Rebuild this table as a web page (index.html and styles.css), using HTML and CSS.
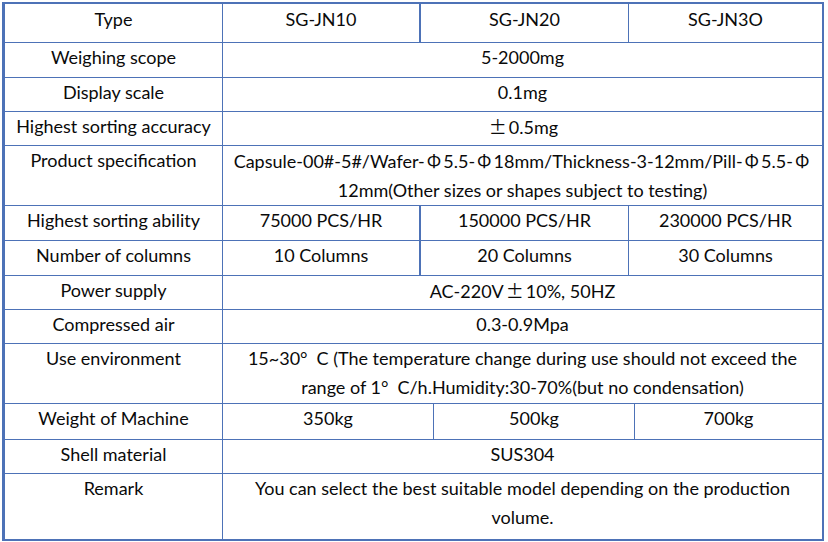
FILE: index.html
```html
<!DOCTYPE html>
<html>
<head>
<meta charset="utf-8">
<link rel="stylesheet" href="styles.css">
</head>
<body>
<div class="sheet">
  <div class="row cols-3 h39">
    <div class="cell">Type</div>
    <div class="cell thick">SG-JN10</div>
    <div class="cell">SG-JN20</div>
    <div class="cell">SG-JN3O</div>
  </div>
  <div class="row cols-1 h35">
    <div class="cell">Weighing scope</div>
    <div class="cell">5-2000mg</div>
  </div>
  <div class="row cols-1 h34">
    <div class="cell">Display scale</div>
    <div class="cell">0.1mg</div>
  </div>
  <div class="row cols-1 h34">
    <div class="cell">Highest sorting accuracy</div>
    <div class="cell"><span class="fw">±</span>0.5mg</div>
  </div>
  <div class="row cols-1 h60">
    <div class="cell">Product specification</div>
    <div class="cell">Capsule-00#-5#/Wafer-<span class="fw">Φ</span>5.5-<span class="fw">Φ</span>18mm/Thickness-3-12mm/Pill-<span class="fw">Φ</span>5.5-<span class="fw">Φ</span> 12mm(Other sizes or shapes subject to testing)</div>
  </div>
  <div class="row cols-3 h35">
    <div class="cell">Highest sorting ability</div>
    <div class="cell thick">75000 PCS/HR</div>
    <div class="cell">150000 PCS/HR</div>
    <div class="cell">230000 PCS/HR</div>
  </div>
  <div class="row cols-3 h35">
    <div class="cell">Number of columns</div>
    <div class="cell thick">10 Columns</div>
    <div class="cell">20 Columns</div>
    <div class="cell">30 Columns</div>
  </div>
  <div class="row cols-1 h34">
    <div class="cell">Power supply</div>
    <div class="cell">AC-220V<span class="fw">±</span>10%, 50HZ</div>
  </div>
  <div class="row cols-1 h34">
    <div class="cell">Compressed air</div>
    <div class="cell">0.3-0.9Mpa</div>
  </div>
  <div class="row cols-1 h60">
    <div class="cell">Use environment</div>
    <div class="cell">15~30°&ensp;C (The temperature change during use should not exceed the range of 1°&ensp;C/h.Humidity:30-70%(but no condensation)</div>
  </div>
  <div class="row cols-3b h36">
    <div class="cell">Weight of Machine</div>
    <div class="cell">350kg</div>
    <div class="cell">500kg</div>
    <div class="cell">700kg</div>
  </div>
  <div class="row cols-1 h34">
    <div class="cell">Shell material</div>
    <div class="cell">SUS304</div>
  </div>
  <div class="row cols-1 h65 last">
    <div class="cell">Remark</div>
    <div class="cell">You can select the best suitable model depending on the production volume.</div>
  </div>
</div>
</body>
</html>
```
FILE: styles.css
```css
html, body {
  margin: 0;
  padding: 0;
  background: #ffffff;
}

body {
  font-family: Lato, "Noto Sans", sans-serif;
  font-size: 18px;
  color: #0a0a0a;
}

.sheet {
  margin: 2px 0 0 2px;
  width: 817px;
  border: 2px solid #4d72b7;
  border-left-width: 3px;
}

.row {
  display: grid;
  border-bottom: 1px solid #4d72b7;
  box-sizing: border-box;
}

.row.last {
  border-bottom: none;
}

.cols-1 { grid-template-columns: 218px 1fr; }
.cols-3 { grid-template-columns: 218px 198px 208px 1fr; }
.cols-3b { grid-template-columns: 218px 211px 201px 1fr; }

.h34 { height: 34px; }
.h35 { height: 35px; }
.h36 { height: 36px; }
.h39 { height: 39px; }
.h60 { height: 60px; }
.h65 { height: 65px; }

.cell {
  border-right: 1px solid #4d72b7;
  padding: 0 7px;
  line-height: 29px;
  text-align: center;
  overflow: hidden;
}

.cell:last-child {
  border-right: none;
}

.cell.thick {
  border-right-width: 2px;
}

.h39 .cell {
  padding-top: 1px;
}

.fw {
  font-family: "Noto Sans CJK SC", sans-serif;
  margin: 0 2px;
}
```
